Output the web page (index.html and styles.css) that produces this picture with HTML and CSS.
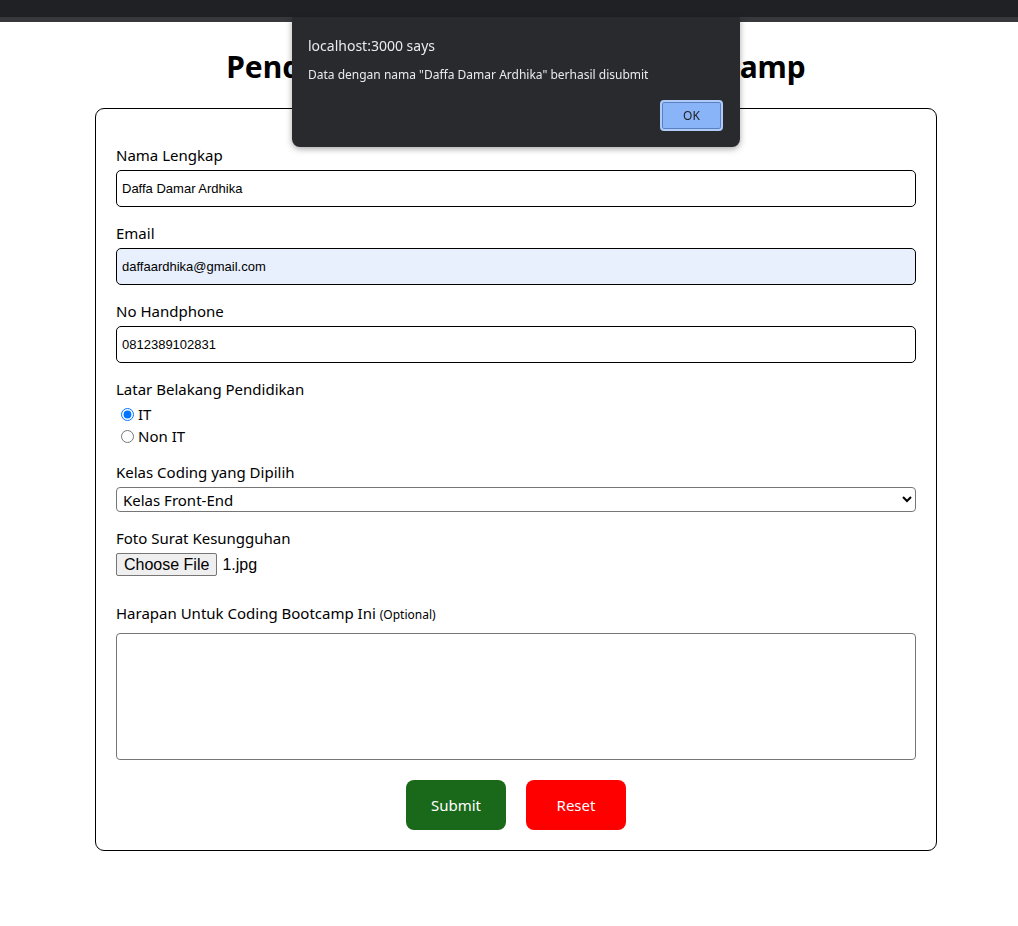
FILE: index.html
```html
<!DOCTYPE html>
<html lang="id">
<head>
<meta charset="utf-8">
<title>Pendaftaran Coding Bootcamp</title>
<link rel="stylesheet" href="styles.css">
</head>
<body>
<div class="topbar"></div>
<main class="page">
  <h1 class="title">Pendaftaran Peserta Coding Bootcamp</h1>
  <form class="card">
    <div class="field">
      <label class="label">Nama Lengkap</label>
      <input class="text-input" type="text" value="Daffa Damar Ardhika">
    </div>
    <div class="field">
      <label class="label">Email</label>
      <input class="text-input autofill" type="text" value="daffaardhika@gmail.com">
    </div>
    <div class="field">
      <label class="label">No Handphone</label>
      <input class="text-input" type="text" value="0812389102831">
    </div>
    <div class="field field-radio">
      <label class="label label-radio">Latar Belakang Pendidikan</label>
      <div class="radio-row"><input class="radio" type="radio" name="bg" checked><span>IT</span></div>
      <div class="radio-row"><input class="radio" type="radio" name="bg"><span>Non IT</span></div>
    </div>
    <div class="field">
      <label class="label">Kelas Coding yang Dipilih</label>
      <select class="select"><option>Kelas Front-End</option></select>
    </div>
    <div class="field field-file">
      <label class="label">Foto Surat Kesungguhan</label>
      <div class="file-row"><button type="button" class="file-btn">Choose File</button><span class="file-name">1.jpg</span></div>
    </div>
    <div class="field">
      <label class="label label-area">Harapan Untuk Coding Bootcamp Ini <small class="optional">(Optional)</small></label>
      <textarea class="textarea"></textarea>
    </div>
    <div class="actions">
      <button type="button" class="btn btn-submit">Submit</button>
      <button type="button" class="btn btn-reset">Reset</button>
    </div>
  </form>
</main>
<div class="dialog">
  <div class="dialog-title">localhost:3000 says</div>
  <div class="dialog-msg">Data dengan nama "Daffa Damar Ardhika" berhasil disubmit</div>
  <div class="dialog-actions"><button type="button" class="dialog-ok">OK</button></div>
</div>
</body>
</html>
```
FILE: styles.css
```css
* { box-sizing: border-box; }
html, body { margin: 0; padding: 0; background: #fff; }
body { font-family: "Noto Sans", "Open Sans", sans-serif; color: #000; }

.topbar {
  height: 22px;
  background: #202124;
  border-bottom: 5px solid #37383b;
}

.page { padding-left: 14px; }

.title {
  margin: 25px 0 21px;
  font-size: 30px;
  line-height: 40px;
  font-weight: 700;
  text-align: center;
}

.card {
  width: 842px;
  margin: 0 auto;
  border: 1px solid #000;
  border-radius: 9px;
  padding: 34px 20px 20px;
}

.field { margin-bottom: 14px; }
.field-radio { margin-bottom: 13px; }
.field-file { margin-bottom: 25px; }

.label {
  display: block;
  font-size: 15px;
  line-height: 24px;
  height: 24px;
  margin-bottom: 3px;
}
.label-radio { margin-bottom: 2px; }
.label-area { margin-bottom: 8px; }
.optional { font-size: 12px; line-height: 1; }

.text-input {
  display: block;
  width: 100%;
  height: 37px;
  border: 1px solid #000;
  border-radius: 5px;
  padding: 0 5px;
  font-family: "Liberation Sans", Arial, sans-serif;
  font-size: 13px;
  color: #000;
  background: #fff;
}
.autofill { background: #e8f0fe; }

.radio-row {
  display: flex;
  align-items: center;
  height: 22px;
  font-size: 15px;
}
.radio { margin: 0 4px 0 5px; width: 13px; height: 13px; }

.select {
  display: block;
  width: 100%;
  height: 25px;
  border: 1px solid #767676;
  border-radius: 4px;
  font-family: "Noto Sans", sans-serif;
  font-size: 15px;
  color: #000;
  background: #fff;
  padding: 0 2px;
}

.file-row { display: flex; align-items: center; height: 23px; }
.file-btn {
  height: 23px;
  padding: 0 7px;
  border: 1px solid #767676;
  border-radius: 2px;
  background: #efefef;
  font-family: "Liberation Sans", Arial, sans-serif;
  font-size: 16px;
  color: #000;
}
.file-name {
  margin-left: 5px;
  font-family: "Liberation Sans", Arial, sans-serif;
  font-size: 16px;
}

.textarea {
  display: block;
  width: 100%;
  height: 127px;
  border: 1px solid #767676;
  border-radius: 4px;
  resize: none;
}

.actions {
  display: flex;
  justify-content: center;
  gap: 20px;
  padding-top: 6px;
}
.btn {
  width: 100px;
  height: 50px;
  border: none;
  border-radius: 8px;
  color: #fff;
  font-family: "Noto Sans", sans-serif;
  font-size: 15px;
}
.btn-submit { background: #1a681a; }
.btn-reset { background: #ff0000; }

.dialog {
  position: fixed;
  left: 292px;
  top: 17px;
  width: 448px;
  height: 130px;
  background: #292a2d;
  border-radius: 2px 2px 8px 8px;
  box-shadow: 0 2px 6px rgba(0,0,0,0.35);
  padding: 19px 16px 16px;
  color: #e8eaed;
  font-family: "Noto Sans", sans-serif;
}
.dialog-title { font-size: 14px; line-height: 20px; }
.dialog-msg { font-size: 12px; line-height: 18px; margin-top: 10px; }
.dialog-actions { display: flex; justify-content: flex-end; margin-top: 16px; margin-right: 1px; }
.dialog-ok {
  width: 63px;
  height: 31px;
  background: #8ab4f8;
  border: 2px solid #aecbfa;
  border-radius: 4px;
  box-shadow: 0 0 0 1px #5b7fbf inset;
  color: #202124;
  font-family: "Noto Sans", sans-serif;
  font-size: 12px;
}
```
